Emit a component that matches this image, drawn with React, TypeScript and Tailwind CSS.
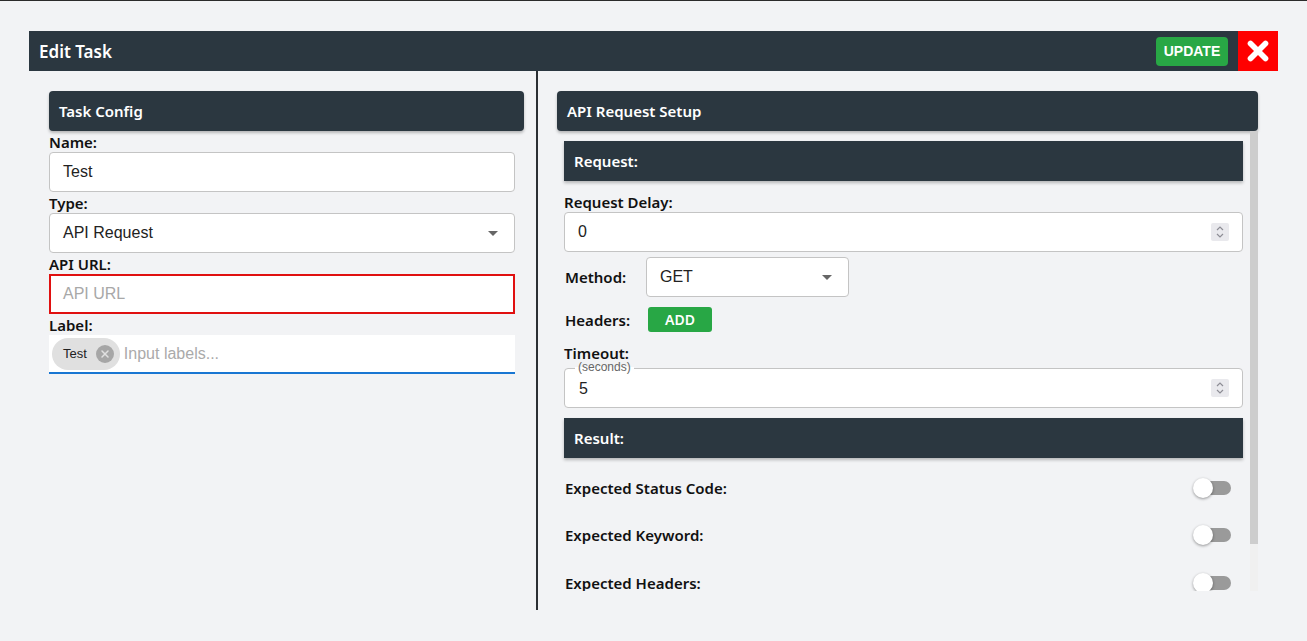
import { X } from "lucide-react";

const label = "text-[15px] font-semibold text-[#111] leading-[20px]";
const inputBox =
  "h-[40px] w-full rounded-[4px] border border-[#c4c4c4] bg-white px-[13px] text-[16px] text-[#222] flex items-center";

function Spinner() {
  return (
    <div className="flex h-[18px] w-[18px] flex-col items-center justify-center rounded-[2px] bg-[#e9e9ed]">
      <svg viewBox="0 0 10 14" className="h-[14px] w-[10px]" fill="none" stroke="#8d8d95" strokeWidth="1.2">
        <path d="M2 5 L5 2 L8 5" />
        <path d="M2 9 L5 12 L8 9" />
      </svg>
    </div>
  );
}

function Caret() {
  return (
    <svg viewBox="0 0 10 5" className="h-[5px] w-[10px]">
      <path d="M0 0 L10 0 L5 5 Z" fill="#666" />
    </svg>
  );
}

function Toggle() {
  return (
    <div className="relative h-[20px] w-[38px]">
      <div className="absolute left-[3px] top-[3px] h-[14px] w-[35px] rounded-full bg-[#9a9a9a]" />
      <div className="absolute left-0 top-0 h-[20px] w-[20px] rounded-full bg-white shadow-[0_1px_3px_rgba(0,0,0,0.4)]" />
    </div>
  );
}

function Bar({ title, rounded = true }: { title: string; rounded?: boolean }) {
  return (
    <div
      className={`flex h-[40px] items-center bg-[#2b3740] px-[10px] text-[15px] font-semibold text-white shadow-[0_2px_3px_rgba(0,0,0,0.25)] ${
        rounded ? "rounded-[4px]" : ""
      }`}
    >
      {title}
    </div>
  );
}

export default function App() {
  return (
    <div className="h-[641px] w-[1307px] overflow-hidden border-t border-[#2b2b2b] bg-[#f2f3f5] font-['Noto_Sans',sans-serif]">
      <div className="mx-[29px] mt-[30px]">
        {/* header */}
        <div className="flex h-[40px] items-center bg-[#2b3740] pl-[10px]">
          <h1 className="flex-1 pt-[1px] text-[17px] font-semibold text-white">Edit Task</h1>
          <button className="mr-[10px] h-[29px] w-[72px] rounded-[4px] bg-[#28a745] font-['Liberation_Sans',sans-serif] text-[14px] font-bold text-white">
            UPDATE
          </button>
          <button className="flex h-[40px] w-[40px] items-center justify-center bg-[#ff0000]">
            <X className="h-[30px] w-[30px] text-white" strokeWidth={4.5} />
          </button>
        </div>

        <div className="flex h-[539px]">
          {/* left column */}
          <div className="w-[507px] pl-[20px] pr-[12px] pt-[20px]">
            <Bar title="Task Config" />
            <div className="mt-[1px] w-[466px]">
              <div className={label}>Name:</div>
              <div className={inputBox + " font-['Liberation_Sans',sans-serif]"}>Test</div>
              <div className={label + " mt-[1px]"}>Type:</div>
              <div className={inputBox + " justify-between font-['Liberation_Sans',sans-serif]"}>
                <span>API Request</span>
                <span className="mr-[3px]">
                  <Caret />
                </span>
              </div>
              <div className={label + " mt-[1px]"}>API URL:</div>
              <div className="flex h-[40px] w-full items-center border-2 border-[#e01010] bg-white px-[12px] font-['Liberation_Sans',sans-serif] text-[16px] text-[#a8a8a8]">
                API URL
              </div>
              <div className={label + " mt-[1px]"}>Label:</div>
              <div className="flex h-[39px] w-full items-center border-b-2 border-[#1976d2] bg-white pl-[3px] font-['Liberation_Sans',sans-serif]">
                <div className="flex h-[32px] items-center rounded-full bg-[#e0e0e0] pl-[11px] pr-[6px] text-[13px] text-[#222]">
                  <span>Test</span>
                  <span className="ml-[9px] flex h-[18px] w-[18px] items-center justify-center rounded-full bg-[#a6a6a6]">
                    <X className="h-[12px] w-[12px] text-[#e0e0e0]" strokeWidth={3} />
                  </span>
                </div>
                <span className="ml-[4px] text-[16px] text-[#aaa]">Input labels...</span>
              </div>
            </div>
          </div>

          {/* divider */}
          <div className="w-[2px] bg-[#2b2f33]" />

          {/* right column */}
          <div className="flex-1 pl-[19px] pr-[20px] pt-[20px]">
            <Bar title="API Request Setup" />
            <div className="flex h-[460px]">
              <div className="flex-1 overflow-hidden px-[7px] pt-[10px]">
                <Bar title="Request:" rounded={false} />
                <div className={label + " mt-[11px]"}>Request Delay:</div>
                <div className={inputBox + " justify-between pr-[13px] font-['Liberation_Sans',sans-serif]"}>
                  <span>0</span>
                  <Spinner />
                </div>
                <div className="mt-[5px] flex items-center">
                  <div className={label + " w-[82px] pl-[1px]"}>Method:</div>
                  <div className="flex h-[40px] w-[203px] items-center justify-between rounded-[4px] border border-[#c4c4c4] bg-white px-[13px] font-['Liberation_Sans',sans-serif] text-[16px] text-[#222]">
                    <span>GET</span>
                    <span className="mr-[3px]">
                      <Caret />
                    </span>
                  </div>
                </div>
                <div className="mt-[10px] flex items-center">
                  <div className={label + " w-[84px] pl-[1px]"}>Headers:</div>
                  <button className="h-[25px] w-[64px] rounded-[3px] bg-[#28a745] text-[14px] font-semibold text-white">
                    ADD
                  </button>
                </div>
                <div className={label + " mt-[11px]"}>Timeout:</div>
                <div className="relative mt-[5px] flex h-[40px] items-center justify-between rounded-[4px] border border-[#c4c4c4] bg-white pl-[14px] pr-[13px] font-['Liberation_Sans',sans-serif]">
                  <span className="absolute left-[10px] top-[-8px] bg-[linear-gradient(to_bottom,#f2f3f5_50%,#ffffff_50%)] px-[3px] text-[12px] leading-[13px] text-[#666]">
                    (seconds)
                  </span>
                  <span className="pt-[2px] text-[16px] text-[#222]">5</span>
                  <Spinner />
                </div>
                <div className="mt-[10px]">
                  <Bar title="Result:" rounded={false} />
                </div>
                <div className="mt-[18px] flex h-[24px] items-center justify-between pr-[12px]">
                  <div className={label + " pl-[1px]"}>Expected Status Code:</div>
                  <Toggle />
                </div>
                <div className="mt-[23px] flex h-[24px] items-center justify-between pr-[12px]">
                  <div className={label + " pl-[1px]"}>Expected Keyword:</div>
                  <Toggle />
                </div>
                <div className="mt-[24px] flex h-[24px] items-center justify-between pr-[12px]">
                  <div className={label + " pl-[1px]"}>Expected Headers:</div>
                  <Toggle />
                </div>
              </div>
              {/* scrollbar */}
              <div className="flex w-[8px] flex-col bg-[#f0f0f0]">
                <div className="h-[413px] bg-[#cdcdcd]" />
              </div>
            </div>
          </div>
        </div>
      </div>
    </div>
  );
}
